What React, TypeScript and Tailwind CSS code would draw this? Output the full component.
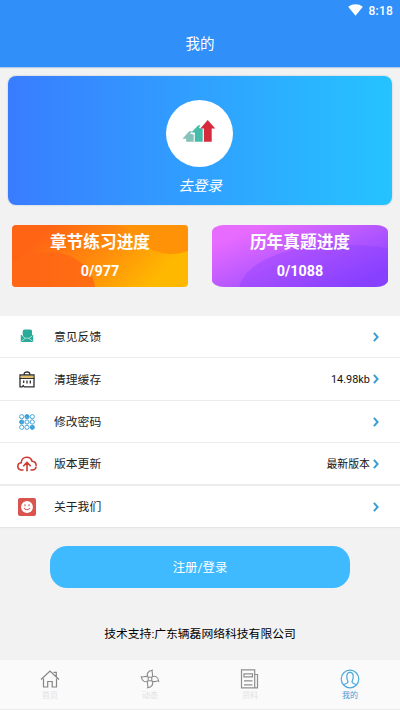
import type { ReactNode } from "react"

const font = "font-[Roboto,'Noto_Sans_CJK_SC',sans-serif]"

function WifiIcon() {
  return (
    <svg width="15" height="12" viewBox="0 0 15 12" className="-mt-px">
      <path d="M0.2 2.8C4.4-.5 10.6-.5 14.8 2.8L7.5 11.8Z" fill="#fff" />
    </svg>
  )
}

function GrowthLogo() {
  return (
    <svg width="34" height="24" viewBox="0 0 34 24" className="-ml-px -mt-[5px]">
      <path d="M0.5 19.8L7.2 12.3L10 12L8.2 14.8L11.7 15.5V22.8H4.2V19.8Z" fill="#86c1ba" />
      <path d="M9.3 13.6L16 6.6L18.3 6L17 9L20.7 9.8V22.8H12.8V13.6Z" fill="#45bba9" />
      <path d="M25.7 1L33.2 9.6H29.7V22.8H21.9V9.6H18.4Z" fill="#d52b3d" />
    </svg>
  )
}

function FeedbackIcon() {
  return (
    <svg width="14" height="14" viewBox="0 0 14 14" className="-mt-px">
      <path d="M2.7 2.5Q2.7 .5 4.7 .5H10.5Q12 .5 12 2V8L8 10H6L2.7 8Z" fill="#2aaa98" />
      <path d="M.8 5.5L6.2 9.5H8.3L13.2 5.5V13H.8Z" fill="#2aaa98" />
      <path d="M2.5 5V7L5.2 9.2H9L12.2 7M1.5 12.3L5 9.5M12.7 12.3L9.2 9.5" fill="none" stroke="#c9ece7" strokeWidth=".8" />
    </svg>
  )
}

function CacheIcon() {
  return (
    <svg width="16" height="17" viewBox="0 0 16 17" fill="none" stroke="#303030" strokeWidth="1.3">
      <path d="M5.2 4V3Q5.2 1 8 1T10.8 3V4" />
      <path d="M1 4H15V7.4H1Z" />
      <path d="M1.7 5.7H14.3" stroke="#e8bd58" strokeWidth="1.8" />
      <path d="M1 7.3V15.8H3.2L4.2 14.6L5.2 15.8H15V7.3M4.7 9.6V12M8 9.6V12.5M11.3 9.6V12.5" />
    </svg>
  )
}

function PasswordIcon() {
  const filled = [1, 3, 8]
  return (
    <svg width="16" height="16" viewBox="0 0 16 16">
      {Array.from({ length: 9 }, (_, i) => (
        <circle
          key={i}
          cx={2.7 + (i % 3) * 5.3}
          cy={2.7 + Math.floor(i / 3) * 5.3}
          r="2.1"
          fill={filled.includes(i) ? "#2f96d4" : "#fff"}
          stroke="#45a6dc"
          strokeWidth="1"
        />
      ))}
      <path d="M7.3 2.5L8.4 3.5M2.3 8H3.4M12.8 12.5L13.8 13.5" stroke="#b8e1f7" strokeWidth=".8" />
    </svg>
  )
}

function CloudIcon() {
  return (
    <svg width="20" height="16" viewBox="0 0 20 16" fill="none" stroke="#cd3a32" strokeWidth="1.6" strokeLinecap="round">
      <path d="M6 14H4.6C2.2 14 .8 12.3 .8 10.4C.8 8.3 2.3 7 4.2 6.8C4.3 3.4 6.6 1.2 9.6 1.2C12.4 1.2 14.5 2.7 15 5.2C17.5 5.3 19.1 7.2 19.1 9.4" />
      <path d="M19 11.2C18.6 13 17.2 14 15.4 14H14" />
      <path d="M10 14.8V6.8M6.7 9.8L10 6.5L13.3 9.8" />
    </svg>
  )
}

function AboutIcon() {
  return (
    <svg width="18" height="18" viewBox="0 0 18 18">
      <rect width="18" height="18" rx="2" fill="#d9534f" />
      <circle cx="9" cy="9" r="5.9" fill="#fff" />
      <path d="M7 6.2V8.2M11 6.2V8.2M6 10Q9 13.6 12 10" fill="none" stroke="#d9534f" strokeWidth="1.1" />
    </svg>
  )
}

function Chevron() {
  return (
    <svg width="6" height="10" viewBox="0 0 6 10" fill="none" stroke="#3b9fd4" strokeWidth="2">
      <path d="M0.9 0.8L4.6 5L0.9 9.2" />
    </svg>
  )
}

function HomeIcon() {
  return (
    <svg width="20" height="20" viewBox="0 0 20 20" fill="none" stroke="#858585" strokeWidth="1.2">
      <path d="M1 10.5L10 2L19 10.5M13.5 3.3H16.3V7.5M3.5 9.5V18H7.7V12.5H12.2V18H16.5V9.5" />
    </svg>
  )
}

function PinwheelIcon() {
  return (
    <svg width="20" height="20" viewBox="0 0 20 20" fill="none" stroke="#8c8c8c" strokeWidth="1.1">
      {[0, 90, 180, 270].map((angle) => (
        <path key={angle} transform={`rotate(${angle} 10 10)`} d="M8.2 8.2C5.8 4.8 8.4 1.8 12.3 1.3C11.2 3.2 13.8 4.6 12 8" />
      ))}
      <rect x="8.2" y="8.2" width="3.6" height="3.6" rx="1.2" />
    </svg>
  )
}

function NewsIcon() {
  return (
    <svg width="20" height="20" viewBox="0 0 20 20" fill="none" stroke="#8f8f8f" strokeWidth="1.2">
      <path d="M1.5 .8H14.7V18.8H1.5ZM14.7 5.5H17.5V18.8H14.7M4 4.8H12.5V7.8H4ZM4 11.8H12.5M4 15.8H12.5" />
    </svg>
  )
}

function UserIcon() {
  return (
    <svg width="20" height="20" viewBox="0 0 20 20" fill="none" stroke="#4ba9dc" strokeWidth="1.2">
      <circle cx="10" cy="10" r="8.8" />
      <path d="M3.5 16C4.5 14.6 8 14.6 8 13C8 11.6 6.8 11 6.8 7.5C6.8 4.8 8 3.3 10 3.3S13.2 4.8 13.2 7.5C13.2 11 12 11.6 12 13C12 14.6 15.5 14.6 16.5 16" />
    </svg>
  )
}

function MenuRow({ icon, label, value, className = "" }: { icon: ReactNode; label: string; value?: string; className?: string }) {
  return (
    <div className={`flex items-center bg-white pr-[21px] ${className}`}>
      <div className="flex w-[54px] justify-center">{icon}</div>
      <span className="pt-px text-[11.8px] leading-[18px] text-[#222]">{label}</span>
      <span className="ml-auto mr-[3px] pt-[2px] text-[10.9px] leading-[16px] text-[#111]">{value}</span>
      <Chevron />
    </div>
  )
}

const tabs = [
  { label: "首页", icon: <HomeIcon /> },
  { label: "动态", icon: <PinwheelIcon /> },
  { label: "资料", icon: <NewsIcon /> },
  { label: "我的", icon: <UserIcon />, active: true },
]

export default function App() {
  return (
    <div className={`flex h-[710px] w-[400px] flex-col overflow-hidden bg-[#f2f2f2] ${font}`}>
      <header className="h-[67px] shrink-0 bg-[#318ff9] text-white shadow-[0_1px_1px_#b5cce8]">
        <div className="flex h-[21px] items-center justify-end gap-[6px] pr-[7px]">
          <WifiIcon />
          <span className="text-[12px] font-medium leading-none tracking-[0.2px]">8:18</span>
        </div>
        <h1 className="pt-[13px] text-center text-[14.5px] leading-[22px]">我的</h1>
      </header>

      <section className="mx-2 mt-[9px] flex h-[129px] shrink-0 flex-col items-center rounded-[8px] bg-linear-to-r from-[#397cff] to-[#25c3ff] pt-[24px] shadow-[0_0_2px_#aebdca]">
        <div className="-ml-px flex size-[67px] items-center justify-center rounded-full bg-white">
          <GrowthLogo />
        </div>
        <span className="mt-[9px] text-[14.5px] italic leading-[22px] text-white">去登录</span>
      </section>

      <section className="mt-5 flex shrink-0 justify-between px-3 text-center font-bold text-white">
        <div className="relative h-[62px] w-[176px] overflow-hidden rounded-[4px]">
          <svg className="absolute inset-0" width="176" height="62" viewBox="0 0 176 62">
            <defs>
              <linearGradient id="orange" x1="0" y1="0" x2="1" y2=".35">
                <stop offset=".2" stopColor="#ff6415" />
                <stop offset=".65" stopColor="#ff910b" />
                <stop offset="1" stopColor="#ffb800" />
              </linearGradient>
              <linearGradient id="hill" x1="0" y1="0" x2="1" y2="0">
                <stop offset=".3" stopColor="#ff6714" />
                <stop offset="1" stopColor="#ff6e12" />
              </linearGradient>
            </defs>
            <path d="M0 0H176V62H0Z" fill="url(#orange)" />
            <path d="M0 38C20 25 43 25 60 32C74 39 81 49 83 62H0Z" fill="url(#hill)" />
            <path d="M105 0H176V26C158 33 139 27 130 17C122 7 117 4 105 0Z" fill="#ff9206" />
          </svg>
          <div className="relative pt-[6px] text-[16.7px] leading-[24px]">章节练习进度</div>
          <div className="relative mt-[6px] text-[14.4px] leading-[22px]">0/977</div>
        </div>
        <div className="relative h-[62px] w-[176px] overflow-hidden rounded-[12px/7px]">
          <svg className="absolute inset-0" width="176" height="62" viewBox="0 0 176 62">
            <defs>
              <linearGradient id="purple" gradientUnits="userSpaceOnUse" x1="55" y1="-8" x2="90" y2="80">
                <stop offset=".05" stopColor="#e86bff" />
                <stop offset=".55" stopColor="#b457ff" />
                <stop offset="1" stopColor="#8a43ff" />
              </linearGradient>
            </defs>
            <path d="M0 0H176V62H0Z" fill="url(#purple)" />
            <path d="M27 62C36 31 92 12 176 23V62Z" fill="#863cff" opacity=".32" />
          </svg>
          <div className="relative pt-[6px] text-[16.7px] leading-[24px]">历年真题进度</div>
          <div className="relative mt-[6px] text-[14.4px] leading-[22px]">0/1088</div>
        </div>
      </section>

      <section className="mt-[29px] flex shrink-0 flex-col gap-px bg-[#ececec] shadow-[0_1px_1px_#e5e5e5]">
        <MenuRow icon={<FeedbackIcon />} label="意见反馈" className="h-[41px]" />
        <MenuRow icon={<CacheIcon />} label="清理缓存" value="14.98kb" className="h-[42px]" />
        <MenuRow icon={<PasswordIcon />} label="修改密码" className="h-[41px]" />
        <MenuRow icon={<CloudIcon />} label="版本更新" value="最新版本" className="h-[41px]" />
        <MenuRow icon={<AboutIcon />} label="关于我们" className="mt-px h-[41px]" />
      </section>

      <button className="mx-[50px] mt-[19px] h-[42px] shrink-0 rounded-[17px] bg-[#40baff] pt-[2px] text-[12.4px] text-white">注册/登录</button>
      <p className="mt-[37px] text-center text-[11.8px] leading-[18px] text-black">技术支持:广东辆磊网络科技有限公司</p>

      <nav className="mt-auto flex h-[50px] shrink-0 border-b border-[#eaeaea] bg-[#fafafa]">
        {tabs.map((tab) => (
          <div key={tab.label} className="flex flex-1 flex-col items-center pt-[9px]">
            {tab.icon}
            <span className={`mt-px text-[8px] leading-[12px] ${tab.active ? "text-[#3b9fd8]" : "text-[#e2e2e2]"}`}>{tab.label}</span>
          </div>
        ))}
      </nav>
    </div>
  )
}
